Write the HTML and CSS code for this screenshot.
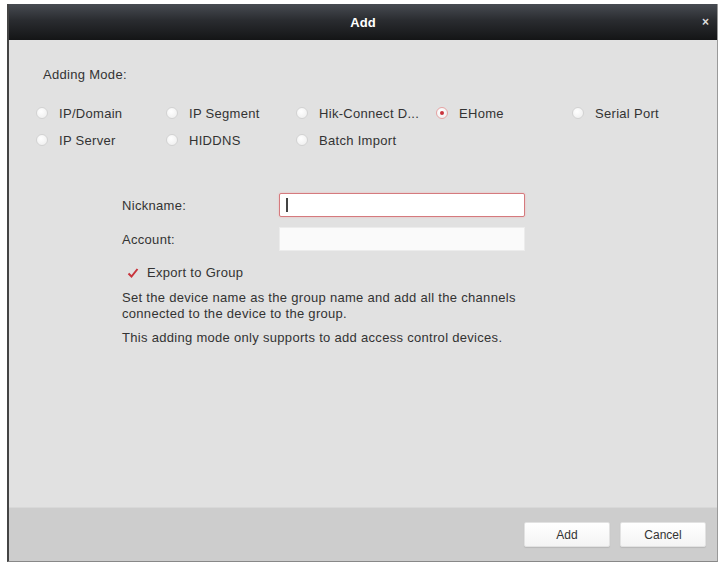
FILE: index.html
```html
<!DOCTYPE html>
<html lang="en">
<head>
  <meta charset="UTF-8" />
  <title>Add</title>
  <link rel="stylesheet" href="styles.css">
</head>
<body>
  <div class="dialog">
    <div class="titlebar">
      <span class="title">Add</span>
      <span class="close">&#215;</span>
    </div>

    <div class="content">
      <div class="mode-label">Adding Mode:</div>
      <div class="modes">
        <label class="radio"><span class="dot"></span>IP/Domain</label>
        <label class="radio"><span class="dot"></span>IP Segment</label>
        <label class="radio"><span class="dot"></span>Hik-Connect D...</label>
        <label class="radio checked"><span class="dot"></span>EHome</label>
        <label class="radio"><span class="dot"></span>Serial Port</label>
        <label class="radio"><span class="dot"></span>IP Server</label>
        <label class="radio"><span class="dot"></span>HIDDNS</label>
        <label class="radio"><span class="dot"></span>Batch Import</label>
      </div>

      <div class="form">
        <div class="field">
          <span class="field-label">Nickname:</span>
          <div class="input focused"><span class="caret"></span></div>
        </div>
        <div class="field">
          <span class="field-label">Account:</span>
          <div class="input"></div>
        </div>
        <label class="check">
          <svg width="12" height="12" viewBox="0 0 12 12"><path d="M1.5 6.5 L4.5 9.5 L10.5 2" fill="none" stroke="#c8343c" stroke-width="2"/></svg>
          Export to Group
        </label>
        <p class="note">Set the device name as the group name and add all the channels<br>connected to the device to the group.</p>
        <p class="note">This adding mode only supports to add access control devices.</p>
      </div>
    </div>

    <div class="footer">
      <button class="btn">Add</button>
      <button class="btn">Cancel</button>
    </div>
  </div>
</body>
</html>
```

FILE: styles.css
```css
html, body {
  margin: 0;
  padding: 0;
  background: #fff;
  font-family: "Liberation Sans", Arial, sans-serif;
  font-size: 13px;
  letter-spacing: 0.3px;
  color: #333;
}
body {
  padding: 4px 5px 0 7px;
}
.dialog {
  width: 708px;
  height: 557px;
  display: flex;
  flex-direction: column;
  border-left: 2px solid #444;
  border-right: 1px solid #999;
  border-bottom: 1px solid #888;
  background: #e1e1e1;
}
.titlebar {
  height: 36px;
  flex: none;
  display: flex;
  align-items: center;
  justify-content: center;
  position: relative;
  background: linear-gradient(#474b52, #2a2c30 45%, #141516);
  color: #fff;
  letter-spacing: 0;
}
.title {
  font-weight: bold;
  font-size: 13px;
}
.close {
  position: absolute;
  right: 8px;
  top: 11px;
  font-size: 12px;
  font-weight: bold;
  color: #ddd;
}
.content {
  flex: 1;
  padding: 27px 0 0 27px;
}
.mode-label {
  margin: 0 0 23px 7px;
}
.modes {
  display: grid;
  grid-template-columns: 130px 130px 140px 136px auto;
  row-gap: 11px;
}
.radio {
  display: flex;
  align-items: center;
  gap: 11px;
  height: 16px;
}
.dot {
  width: 10px;
  height: 10px;
  border-radius: 50%;
  border: 1px solid #d2d2d2;
  background: radial-gradient(circle at 40% 35%, #fff, #ececec);
  position: relative;
}
.radio.checked .dot {
  border-color: #e6a3a3;
}
.radio.checked .dot::after {
  content: "";
  position: absolute;
  left: 3px;
  top: 3px;
  width: 4px;
  height: 4px;
  border-radius: 50%;
  background: #c9353d;
}
.form {
  margin: 45px 0 0 86px;
}
.field {
  display: flex;
  align-items: center;
  height: 24px;
  margin-bottom: 10px;
}
.field-label {
  width: 157px;
}
.input {
  width: 244px;
  height: 22px;
  background: #fafafa;
  border: 1px solid #ececec;
  display: flex;
  align-items: center;
}
.input.focused {
  background: #fff;
  border-color: #d57a7e;
  box-shadow: 0 0 2px #f0b4b4;
  border-radius: 2px;
}
.caret {
  width: 2px;
  height: 14px;
  margin-left: 6px;
  background: #444;
}
.check {
  display: flex;
  align-items: center;
  gap: 8px;
  margin: 14px 0 0 5px;
}
.note {
  margin: 10px 0 0;
  line-height: 16px;
}
.note + .note {
  margin-top: 8px;
}
.footer {
  height: 53px;
  flex: none;
  background: #cdcdcd;
  border-top: 1px solid #d8d8d8;
  display: flex;
  align-items: center;
  justify-content: flex-end;
  gap: 10px;
  padding-right: 11px;
}
.btn {
  width: 86px;
  height: 25px;
  font-family: inherit;
  font-size: 12px;
  color: #333;
  background: linear-gradient(#fff, #f4f4f4);
  border: 1px solid #e2e2e2;
  border-radius: 2px;
  box-shadow: 0 1px 1px rgba(0,0,0,0.1);
}
```
